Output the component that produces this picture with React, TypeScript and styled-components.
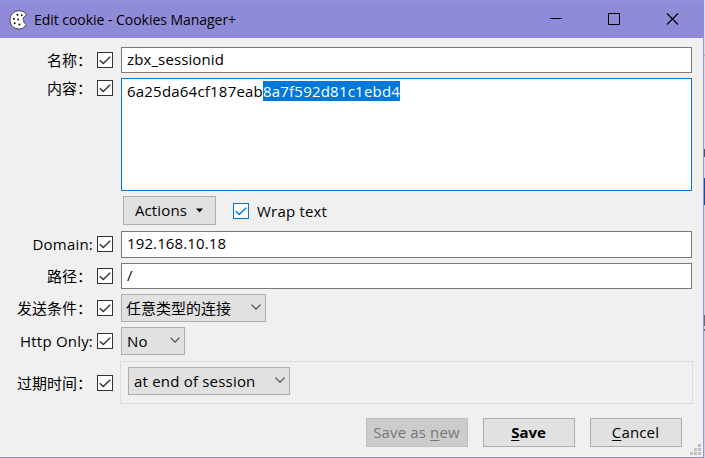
import React from "react";
import styled, { createGlobalStyle, css } from "styled-components";

const GlobalStyle = createGlobalStyle`
  html, body { margin: 0; padding: 0; background: #d9d9e2; overflow: hidden; }
  * { box-sizing: border-box; }
`;

const Screen = styled.div`
  display: flex;
  width: 705px;
  height: 458px;
  font-family: "Open Sans", "Noto Sans CJK SC", sans-serif;
  font-size: 15px;
  line-height: 20px;
  color: #000;
  white-space: nowrap;
`;

const Window = styled.main`
  display: flex;
  flex-direction: column;
  position: relative;
  width: 704px;
  height: 458px;
  background: #f0f0f0;
  border-right: 1px solid #9a94dc;
  border-bottom: 1px solid #8f8ac8;
`;

const Backdrop = styled.div`
  width: 1px;
  background: linear-gradient(
    #dcdce4 0 54px, #b8b8c0 54px 56px, #dcdce4 56px 149px, #505068 149px 157px,
    #dcdce4 157px 178px, #0a559c 178px 205px, #d4d4de 205px 315px,
    #6c6878 315px 326px, #dcdce4 326px 329px, #6c6878 329px 331px, #d0d0dc 331px
  );
`;

const TitleBar = styled.header`
  display: flex;
  align-items: center;
  flex: none;
  width: 704px;
  height: 38px;
  padding-left: 9px;
  background: #908bd8;
  border-top: 1px solid #9691da;
`;

const Title = styled.span`
  flex: 1;
  margin-left: 6px;
  font-size: 14px;
  letter-spacing: -0.04px;
`;

const WindowControls = styled.div`
  display: flex;
  flex: none;
  width: 175px;
  svg { display: block; width: 58px; height: 37px; }
`;

const Form = styled.section`
  display: flex;
  flex-direction: column;
  padding-top: 9px;
`;

const Row = styled.div<{ $height: number; $after: number; $top?: boolean }>`
  display: flex;
  align-items: ${(p) => (p.$top ? "flex-start" : "center")};
  height: ${(p) => p.$height}px;
  margin-bottom: ${(p) => p.$after}px;
`;

const Label = styled.span<{ $lift?: number }>`
  width: 93px;
  margin-right: 4px;
  padding-bottom: ${(p) => p.$lift ?? 0}px;
  text-align: right;
  letter-spacing: 0.2px;
`;

const ChineseLabel = styled(Label)`
  padding-right: 1px;
  letter-spacing: 0;
`;

const CheckFrame = styled.span<{ $active?: boolean; $lift?: number }>`
  display: block;
  flex: none;
  width: 16px;
  height: 16px;
  margin-bottom: ${(p) => p.$lift ?? 0}px;
  background: #fff;
  border: 1px solid ${(p) => (p.$active ? "#0078d7" : "#333")};
  color: ${(p) => (p.$active ? "#0078d7" : "#333")};
  svg { display: block; }
`;

const field = css`
  width: 571px;
  margin-left: 8px;
  padding: 0 5px;
  background: #fff;
`;

const Input = styled.div<{ $height: number }>`
  ${field}
  height: ${(p) => p.$height}px;
  line-height: 23px;
  border: 1px solid #7a7a7a;
  letter-spacing: 0.12px;
`;

const TextArea = styled.div`
  ${field}
  display: flex;
  height: 113px;
  padding-top: 2px;
  border: 1px solid #0078d7;
`;

const HashPart = styled.span<{ $selected?: boolean; $width: number }>`
  flex: none;
  width: ${(p) => p.$width}px;
  height: 20px;
  letter-spacing: 0.21px;
  ${(p) => p.$selected && "background: #0078d7; color: #fff;"}
`;

const LabelCell = styled.div`
  display: flex;
  padding-top: 2px;
  line-height: 16px;
`;

const OptionsRow = styled.div`
  display: flex;
  align-items: center;
  height: 29px;
  margin: 0 0 6px 123px;
`;

const Button = styled.div<{ $width: number; $disabled?: boolean; $bold?: boolean }>`
  display: flex;
  align-items: center;
  justify-content: center;
  width: ${(p) => p.$width}px;
  height: 29px;
  padding: 0 1px 1px 0;
  background: ${(p) => (p.$disabled ? "#ccc" : "#e1e1e1")};
  border: 1px solid ${(p) => (p.$disabled ? "#bfbfbf" : "#adadad")};
  color: ${(p) => (p.$disabled ? "#777" : "#000")};
  letter-spacing: ${(p) => (p.$bold ? 0 : 0.15)}px;
  font-weight: ${(p) => (p.$bold ? 700 : 400)};
  u { text-underline-offset: 2px; text-decoration-thickness: 1px; text-decoration-skip-ink: none; }
`;

const MenuArrow = styled.svg`
  display: block;
  margin: 0 0 0 9px;
`;

const WrapOption = styled.div`
  display: flex;
  align-items: center;
  gap: 8px;
  margin-left: 17px;
  letter-spacing: 0.2px;
`;

const Select = styled.div<{ $width: number; $chinese?: boolean; $indent?: number }>`
  display: flex;
  align-items: center;
  justify-content: space-between;
  flex: none;
  width: ${(p) => p.$width}px;
  height: 28px;
  margin-left: ${(p) => p.$indent ?? 8}px;
  padding: 0 4px 0 ${(p) => (p.$chinese ? 4 : 5)}px;
  background: #e1e1e1;
  border: 1px solid #adadad;
  letter-spacing: ${(p) => (p.$chinese ? 0 : 0.2)}px;
  svg { display: block; margin-top: -2px; }
`;

const Group = styled.div`
  display: flex;
  width: 573px;
  height: 43px;
  margin-left: 7px;
  padding-top: 5px;
  border: 1px solid #dcdcdc;
`;

const Footer = styled.footer`
  display: flex;
  justify-content: flex-end;
  gap: 15px;
  padding-right: 21px;
`;

const Grip = styled.svg`
  position: absolute;
  right: 2px;
  bottom: 2px;
`;

const Check = ({ active, lift }: { active?: boolean; lift?: number }) => (
  <CheckFrame $active={active} $lift={lift}>
    <svg width="14" height="14" viewBox="0 0 14 14" fill="none" stroke="currentColor" strokeWidth="1.4">
      <path d="M1.8 7.2 L5.3 10.6 L12.2 3.7" />
    </svg>
  </CheckFrame>
);

const Chevron = () => (
  <svg width="10" height="6" viewBox="0 0 10 6" fill="none" stroke="#444" strokeWidth="1.1">
    <path d="M.5 .6 L5 5.1 L9.5 .6" />
  </svg>
);

const CookieIcon = () => (
  <svg width="19" height="20" viewBox="0 0 19 20">
    <path
      d="M10 .8 C14 .8 16.5 2.6 17.6 5.2 C16 6 14.2 6.8 14.2 8.8 C14.2 10.6 15.2 11 14.8 12.4 C15.5 13.6 17 13.2 17.2 14.4 C15.8 17.4 13.2 19 10 19 C4.8 19 1 15.2 1 10 C1 4.8 4.8 .8 10 .8Z"
      fill="#fff" stroke="#44434c" strokeWidth="1"
    />
    <g fill="#16161c">
      <circle cx="8.5" cy="4.8" r="1.05" /><circle cx="12.8" cy="5.2" r="1" />
      <circle cx="4.9" cy="8.7" r="1" /><circle cx="9.2" cy="9.5" r="1.05" />
      <circle cx="5.7" cy="13.3" r="1.05" /><circle cx="10.5" cy="14.5" r="1.05" />
    </g>
  </svg>
);

export default function App() {
  return (
    <Screen>
      <GlobalStyle />
      <Window>
        <TitleBar>
          <CookieIcon />
          <Title>Edit cookie - Cookies Manager+</Title>
          <WindowControls>
            <svg viewBox="0 0 58 37"><path d="M21 17.5 H33" stroke="#000" /></svg>
            <svg viewBox="0 0 58 37"><path d="M21.5 12.5 H32.5 V23.5 H21.5Z" fill="none" stroke="#000" /></svg>
            <svg viewBox="0 0 58 37"><path d="M22 12.5 L33 23.5 M33 12.5 L22 23.5" stroke="#000" strokeWidth="1.1" /></svg>
          </WindowControls>
        </TitleBar>
        <Form>
          <Row $height={26} $after={5}>
            <ChineseLabel>名称：</ChineseLabel><Check />
            <Input $height={26}>zbx_sessionid</Input>
          </Row>
          <Row $height={113} $after={5} $top>
            <LabelCell><ChineseLabel>内容：</ChineseLabel><Check /></LabelCell>
            <TextArea>
              <HashPart $width={136}>6a25da64cf187eab</HashPart>
              <HashPart $width={137} $selected>8a7f592d81c1ebd4</HashPart>
            </TextArea>
          </Row>
          <OptionsRow>
            <Button $width={93}>
              Actions
              <MenuArrow width="7" height="5" viewBox="0 0 7 5"><path d="M0 .5 H7 L3.5 4.5Z" /></MenuArrow>
            </Button>
            <WrapOption><Check active />Wrap text</WrapOption>
          </OptionsRow>
          <Row $height={27} $after={5}>
            <Label $lift={2}>Domain:</Label><Check lift={1} />
            <Input $height={27}>192.168.10.18</Input>
          </Row>
          <Row $height={26} $after={5}>
            <ChineseLabel>路径：</ChineseLabel><Check />
            <Input $height={26}>/</Input>
          </Row>
          <Row $height={28} $after={5}>
            <ChineseLabel>发送条件：</ChineseLabel><Check />
            <Select $width={145} $chinese>任意类型的连接<Chevron /></Select>
          </Row>
          <Row $height={28} $after={6}>
            <Label>Http Only:</Label><Check />
            <Select $width={64}>No<Chevron /></Select>
          </Row>
          <Row $height={43} $after={14}>
            <ChineseLabel>过期时间：</ChineseLabel><Check />
            <Group><Select $width={162} $indent={7}>at end of session<Chevron /></Select></Group>
          </Row>
        </Form>
        <Footer>
          <Button $width={102} $disabled><span>Save as <u>n</u>ew</span></Button>
          <Button $width={92} $bold><span><u>S</u>ave</span></Button>
          <Button $width={92}><span><u>C</u>ancel</span></Button>
        </Footer>
        <Grip width="11" height="11" viewBox="0 0 11 11" fill="#bfbfbf">
          <path d="M8 0h3v3h-3z M4 4h3v3h-3z M8 4h3v3h-3z M0 8h3v3h-3z M4 8h3v3h-3z M8 8h3v3h-3z" />
        </Grip>
      </Window>
      <Backdrop />
    </Screen>
  );
}
